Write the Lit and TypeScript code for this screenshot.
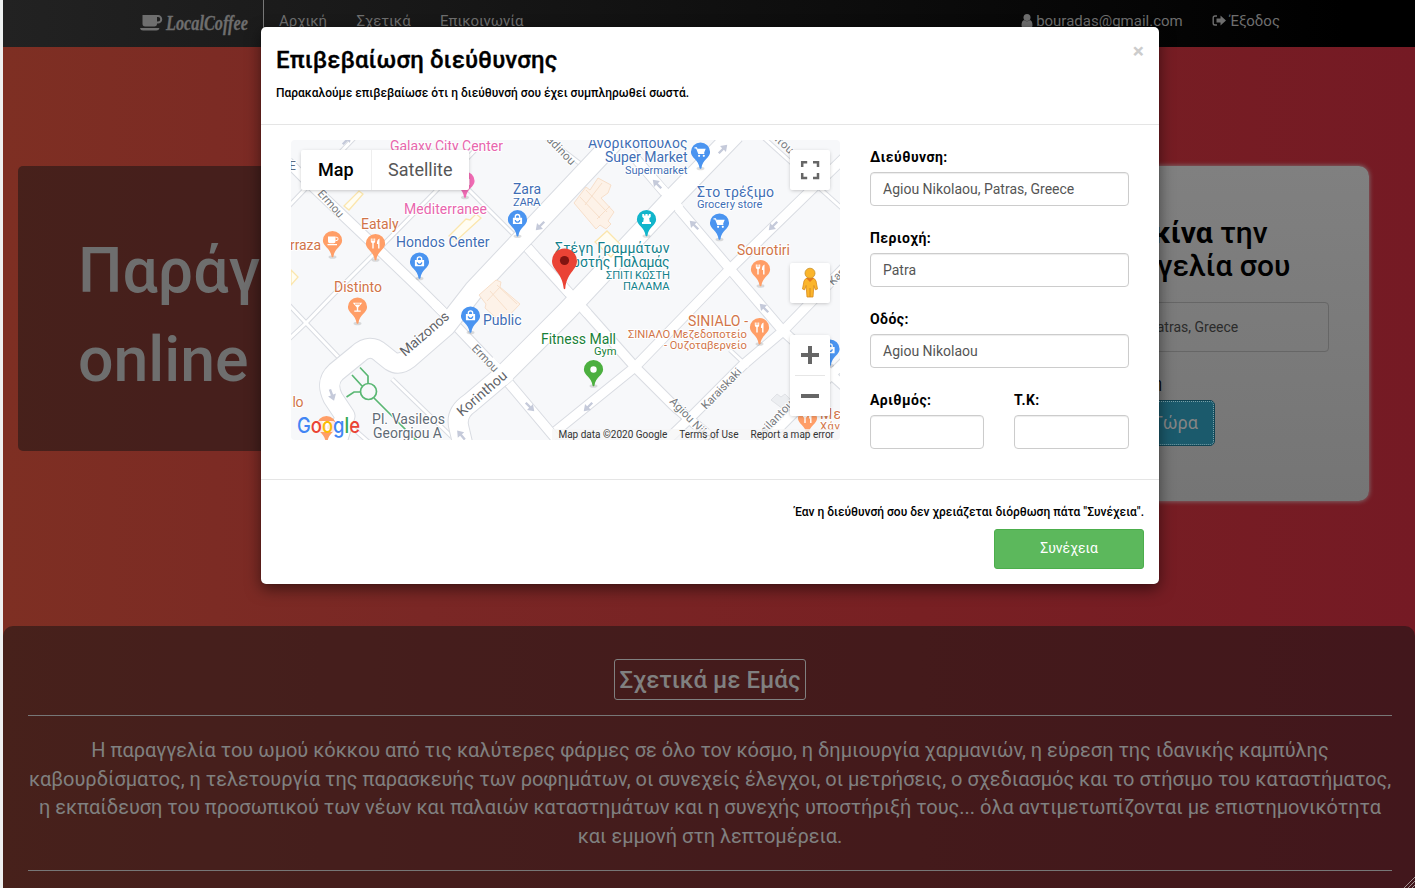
import { LitElement, html, svg, css } from "lit";
import { customElement } from "lit/decorators.js";

type Pin = { x: number; y: number; color: string; glyph: string };

const BLUE = "#4a94f0";
const ORANGE = "#ff9e67";

const pins: Pin[] = [
  { x: 465, y: 181, color: "#f06bb4", glyph: "bed" },
  { x: 517.5, y: 219.7, color: BLUE, glyph: "bag" },
  { x: 419.5, y: 262, color: BLUE, glyph: "bag" },
  { x: 470.5, y: 316, color: BLUE, glyph: "bag" },
  { x: 830, y: 349, color: BLUE, glyph: "bag" },
  { x: 700.5, y: 152, color: BLUE, glyph: "cart" },
  { x: 719.5, y: 223, color: BLUE, glyph: "cart" },
  { x: 332.5, y: 240.5, color: ORANGE, glyph: "cup" },
  { x: 375.5, y: 243.5, color: ORANGE, glyph: "fork" },
  { x: 357.5, y: 307, color: ORANGE, glyph: "glass" },
  { x: 760.5, y: 269.5, color: ORANGE, glyph: "fork" },
  { x: 759.5, y: 327.5, color: ORANGE, glyph: "fork" },
  { x: 807.5, y: 418, color: ORANGE, glyph: "fork" },
  { x: 326.5, y: 425.5, color: ORANGE, glyph: "glass" },
  { x: 646.5, y: 219.5, color: "#12b5cb", glyph: "tower" },
  { x: 593.5, y: 369.5, color: "#4caf3f", glyph: "dot" },
];

const glyphs: Record<string, unknown> = {
  bag: svg`<path d="M-4.6-2h9.2v6.2h-9.2z" fill="#fff"/><path d="M-2.2-1.5v-1.5a2.2 2.2 0 0 1 4.4 0v1.5" fill="none" stroke="#fff" stroke-width="1.3"/><path d="M-2.2.2a2.2 2.2 0 0 0 4.4 0" fill="none" stroke="#4a94f0" stroke-width="1.2"/>`,
  cart: svg`<path d="M-6-4.2h2l2.2 5.6h5.6" fill="none" stroke="#fff" stroke-width="1.2"/><path d="M-3.4-3.2h8.6l-1.7 4.2h-5.5z" fill="#fff"/><circle cx="-1.4" cy="3.8" r="1.1" fill="#fff"/><circle cx="3.3" cy="3.8" r="1.1" fill="#fff"/>`,
  cup: svg`<path d="M-4.5-4h7.5v5q0 1.8-1.8 1.8h-3.9q-1.8 0-1.8-1.8zM-5 3.6h9.5v1.2h-9.5z" fill="#fff"/><path d="M3-3.2h1.5q1 0 1 1.6t-1 1.6h-1.5" fill="none" stroke="#fff"/>`,
  fork: svg`<path d="M-4.7-5v2.8q0 1.6 1.5 2v5.2h1.4v-5.2q1.5-.4 1.5-2v-2.8h-1v2.6h-.7v-2.6h-1v2.6h-.7v-2.6zM4-5q-2.6.8-2.6 5.4h1.2v4.6h1.4z" fill="#fff"/>`,
  glass: svg`<path d="M-4.7-4.3h9.4l-4 4.7v3.2h2.5v1.2h-6.4v-1.2h2.5v-3.2z" fill="#fff"/><path d="M-2.5-2.9h5" stroke="#ff9e67"/>`,
  tower: svg`<path d="M-4.2-5.5h1.9v1.5h1.2v-1.5h2.2v1.5h1.2v-1.5h1.9v3l-1.5 1.2.6 3.8h1.2v2h-9v-2h1.2l.6-3.8-1.500-1.200z" fill="#fff"/>`,
  bed: svg`<path d="M-4.5-3.5h1.3v4h2.2v-2.5h5.5v6h-1.3v-1.6h-6.4v1.6h-1.3z" fill="#fff"/>`,
  dot: svg`<circle r="3.2" fill="#fff"/>`,
};

const drawPin = (p: Pin) => svg`
  <g transform="translate(${p.x} ${p.y})">
    <ellipse cy="16.5" rx="4" ry="1.8" fill="#000" opacity=".13"/>
    <path d="M-9.6 0a9.6 9.6 0 1 1 19.2 0c0 6-7.6 7.5-8.7 16.2q-.9 1-1.8 0c-1.1-8.7-8.7-10.2-8.7-16.2z" fill=${p.color}/>
    ${glyphs[p.glyph]}
  </g>`;

const arterials = [
  "M336 445L345 416L333 398Q325 382 336 372L358 354Q370 343 381 353L391 361Q399 366 408 359L446 326L474 290L618 137L660 97",
  "M463 445L459 428Q455 413 470 403L503 375L567 311L670 201L735 134",
];
const streets = [
  "M556 434L635 370L730 272L845 160",
  "M665 445L693 418L743 368L783 334L845 270",
  "M765 445L845 364",
  "M288 165L313 190L373 247L423 295L442 314L497 372L556 442",
  "M526 249L580 308L635 370L673 408L716 445",
  "M630 155L667 198L730 272L783 334L845 390",
];
const lanes = [
  "M288 210L358 137", "M536 133L582 168", "M754 132L845 214",
  "M426 150L517 241",
  "M288 307L306 326L346 368", "M288 343L306 326L333 298L373 258L433 197L480 148",
  "M392 382L452 440", "M347 426L373 449", "M730 353L748 370",
];

type Label = [string, number, number, number, number, string, string?];
const labels: Label[] = [
  ["Galaxy City Center", 390, 150.5, 14, 113, "#e866ae"],
  ["Mediterranee", 404, 214, 14, 83, "#e866ae"],
  ["Zara", 513, 194, 14, 28, "#3f6eb5"],
  ["ZARA", 513, 206, 11.5, 27.5, "#3f6eb5"],
  ["Hondos Center", 396, 247, 14, 93.5, "#3f6eb5"],
  ["Public", 483, 325, 14, 38.5, "#3f6eb5"],
  ["Eataly", 361, 229, 14, 37.5, "#d17448"],
  ["rraza", 290, 250, 14, 31, "#d17448"],
  ["Distinto", 334, 292, 14, 48, "#d17448"],
  ["lo", 292.5, 407, 14, 11, "#d17448"],
  ["E", 289, 170, 12, 8, "#5b6b83"],
  ["Ανδρικόπουλος", 588, 148, 14, 99.5, "#3f6eb5"],
  ["Super Market", 605, 162, 14, 82.5, "#3f6eb5"],
  ["Supermarket", 625, 174, 11.2, 62.5, "#3f6eb5"],
  ["Στο τρέξιμο", 697, 197, 14, 77, "#3f6eb5"],
  ["Grocery store", 697, 208, 11.2, 65.5, "#3f6eb5"],
  ["Στέγη Γραμμάτων", 555, 253, 14, 114.5, "#12818c"],
  ["Κωστής Παλαμάς", 560, 267, 14, 109.5, "#12818c"],
  ["ΣΠΙΤΙ ΚΩΣΤΗ", 606, 279, 11.2, 64, "#12818c"],
  ["ΠΑΛΑΜΑ", 623, 290, 11.2, 46.5, "#12818c"],
  ["Sourotiri", 737, 255, 14, 53, "#d17448"],
  ["SINIALO -", 688, 326, 14, 60, "#d17448"],
  ["ΣΙΝΙΑΛΟ Μεζεδοποτείο", 628, 338, 11.2, 119, "#d17448"],
  ["- Ουζοταβερνείο", 664, 349, 11.2, 83, "#d17448"],
  ["Fitness Mall", 541, 344, 14, 75, "#188038"],
  ["Gym", 594, 355, 11.2, 22.5, "#188038"],
  ["Pl. Vasileos", 372, 424, 14, 73, "#5f6b76"],
  ["Georgiou A", 373, 438, 14, 69, "#5f6b76"],
  ["Με", 820, 419, 14, 21, "#d17448"],
  ["Χάν", 820, 430, 11.2, 20, "#d17448"],
  ["Maizonos", 405, 357, 14, 60, "#5f6368", "rotate(-41 405 357)"],
  ["Korinthou", 462, 417, 14, 61, "#5f6368", "rotate(-41 462 417)"],
  ["Ermou", 317, 194, 11.5, 33, "#777b80", "rotate(48 317 194)"],
  ["Ermou", 471, 349, 11.5, 33, "#777b80", "rotate(46 471 349)"],
  ["Vadinou", 541, 135, 11.5, 43, "#777b80", "rotate(46 541 135)"],
  ["Karatou", 758, 125, 11.5, 43, "#777b80", "rotate(43 758 125)"],
  ["Agiou Nikolaou", 669, 402, 11.5, 78, "#777b80", "rotate(46 669 402)"],
  ["Karaiskaki", 706, 410, 11.5, 52, "#777b80", "rotate(-46 706 410)"],
  ["Ipsilantou", 758, 442, 11.5, 52, "#777b80", "rotate(-46 758 442)"],
  ["Karaiskaki", 833, 286, 11.5, 50, "#777b80", "rotate(-46 833 286)"],
];

const arrows: [number, number, number][] = [
  [347, 142, -45], [540, 228, 135], [657, 186, -135], [694, 227, -135], [723, 151, -45],
  [773, 228, 135], [764, 310, -135], [588, 418, 135], [530, 418, 45], [332, 406, 70], [461, 446, -130],
];

@customElement("address-map")
export class AddressMap extends LitElement {
  static styles = css`
    :host { display: block; width: 549px; height: 300px; font-family: Roboto, sans-serif; }
    .map { display: grid; width: 549px; height: 300px; overflow: hidden; border-radius: 4px; }
    .canvas, .controls { grid-area: 1 / 1; }
    .canvas { display: block; }
    .label { paint-order: stroke; stroke: #fff; stroke-width: 2px; stroke-linejoin: round; }
    .logo { font-family: Inter, sans-serif; font-size: 21px; font-weight: 500; }
    .halo { stroke: #fff; stroke-width: 3px; fill: #fff; stroke-linejoin: round; }
    .controls { z-index: 1; display: grid; grid-template-columns: 1fr auto; grid-template-rows: 1fr auto; padding: 10px 10px 0 10px; height: 290px; }
    .types { display: flex; align-self: start; height: 40px; width: 168px; background: #fff; border-radius: 2px; box-shadow: 0 1px 4px -1px rgba(0,0,0,.3); font-size: 18px; line-height: 40px; }
    .type { width: 98px; text-align: center; color: #565656; }
    .type.active { width: 70px; color: #000; font-weight: 500; border-right: 1px solid #eee; }
    .stack { display: flex; flex-direction: column; width: 40px; }
    .ctl { width: 40px; height: 40px; background: #fff; border-radius: 2px; box-shadow: 0 1px 4px -1px rgba(0,0,0,.3); }
    .man { margin-top: 73px; }
    .zoom { margin-top: 32px; height: 81px; }
    .ctl svg { display: block; }
    .legal { grid-column: 1 / 3; display: flex; justify-content: flex-end; height: 11px; margin-right: -10px; font-size: 10px; line-height: 11px; color: #333; }
    .legal span { background: rgba(245,245,245,.75); padding: 0 6px; white-space: nowrap; }
  `;
  render() {
    return html`<div class="map">
      <svg class="canvas" width="549" height="300" viewBox="291 140 549 300">
        <rect x="291" y="140" width="549" height="300" fill="#f7f8fa"/>
        <g transform="translate(0 -3)">
        <g fill="none" stroke="#d9dce2" stroke-linejoin="round">
          ${lanes.map((d) => svg`<path d=${d} stroke-width="5"/>`)}
          ${streets.map((d) => svg`<path d=${d} stroke-width="11"/>`)}
        </g>
        <g fill="none" stroke="#fff" stroke-linejoin="round">
          ${lanes.map((d) => svg`<path d=${d} stroke-width="3"/>`)}
          ${streets.map((d) => svg`<path d=${d} stroke-width="9"/>`)}
        </g>
        </g>
        <g fill="none" stroke="#d9dce2" stroke-linejoin="round">
          ${arterials.map((d) => svg`<path d=${d} stroke-width="21"/>`)}
        </g>
        <g fill="none" stroke="#fff" stroke-linejoin="round">
          ${arterials.map((d) => svg`<path d=${d} stroke-width="19"/>`)}
          <path d="M435 304L455 324M490 360L510 382M528 248L535 256M561 284L588 314M655 181L680 209" stroke-width="9"/>
        </g>
        <g fill="#fffdf3" stroke="#fbe6ad" stroke-width="1.3">
          <path d="M344 206l15-15 4 3-14 16z"/>
          <path d="M449 236l17-17 4 1 6-6 5 4-25 23z"/>
          <path d="M291 270l7 7-7 8z"/>
          <path d="M595 242l12-11 14 14-10 12z"/>
        </g>
        <g fill="#fdf2e8" stroke="#f7dfca">
          <path d="M574 203l12-16 4 3 8-12 13 7-3 8-7 5 13 14-6 9 3 3-5 5-6-4-4 4z"/>
          <path d="M586 190l21 22M580 197l20 21M602 183l-17 22M610 206l-13 13" fill="none"/>
          <path d="M479 295l17-15 5 2-1 5 20 17-18 19-17-15 1-4z"/>
          <path d="M497 285l20 19M490 291l17 19M500 287l-13 14" fill="none"/>
        </g>
        <path d="M771 400l6-6 4 3 4-3 9 9-7 9z" fill="#eceef1" stroke="#e0e2e6"/>
        <g fill="none" stroke="#5ab773" stroke-width="1.7">
          <circle cx="368.5" cy="404.500" r="8" transform="translate(0 -13)"/>
          <path d="M368 383.500v-7.500l-8-8.500M362 386l-10-11M360.500 392h-6.500l-7.500 5M374 398l18 18 26 26"/>
        </g>
        ${arrows.map(([x, y, a]) => svg`<path transform="translate(${x} ${y > 400 ? y - 11 : y - 2}) rotate(${a})" d="M-6-1.2h6v-3l6 4.2-6 4.2v-3h-6z" fill="#c5cada"/>`)}
        ${labels.map(([t, x, y, s, w, c, r]) => svg`<text class="label" x=${x} y=${y} font-size=${s} textLength=${w} lengthAdjust="spacing" fill=${c} transform=${r ?? ""}>${t}</text>`)}
        ${pins.map(drawPin)}
        <path d="M552 261a12.5 12.5 0 0 1 25 0c0 9-10.5 12-11.7 27.500q-.8 1.500-1.600 0C562.500 273 552 270 552 261z" fill="#ea4335"/>
        <circle cx="564.5" cy="260.5" r="4.6" fill="#811411"/>
        <rect x="311" y="421" width="26" height="11" rx="5" fill="#fff" opacity=".8"/>
        <text class="logo" x="297" y="433" textLength="63" lengthAdjust="spacingAndGlyphs"><tspan fill="#4285f4">G</tspan><tspan fill="#ea4335">o</tspan><tspan fill="#fbbc04">o</tspan><tspan fill="#4285f4">g</tspan><tspan fill="#34a853">l</tspan><tspan fill="#ea4335">e</tspan></text>
      </svg>
      <div class="controls">
        <div class="types"><span class="type active">Map</span><span class="type">Satellite</span></div>
        <div class="stack">
          <div class="ctl"><svg width="40" height="40" fill="none" stroke="#666" stroke-width="2.500"><path d="M12.200 17v-4.800h5M23 12.200h5v4.800M28 23v5h-5M17.200 28h-5v-5"/></svg></div>
          <div class="ctl man"><svg width="40" height="40"><path d="M14 18q1-3.500 6-3.500t6 3.500l1.500 8-2.200.8-1.400-4.300-.9 11.500h-6l-.9-11.500-1.400 4.300-2.200-.8z" fill="#fbb52b" stroke="#d88a1c" stroke-width=".8"/><path d="M16 15h8l-4 4z" fill="#e5761d"/><path d="M20 25v9" stroke="#d88a1c"/><circle cx="20" cy="10.200" r="5" fill="#fbb52b" stroke="#c6922d" stroke-width=".8"/></svg></div>
          <div class="ctl zoom"><svg width="40" height="81"><path d="M11 20h18M20 11v18M11 61h18" stroke="#666" stroke-width="4"/><path d="M5 40.500h30" stroke="#e6e6e6"/></svg></div>
        </div>
        <div class="legal"><span>Map data ©2020 Google</span><span>Terms of Use</span><span>Report a map error</span></div>
      </div>
    </div>`;
  }
}

@customElement("app-root")
export class AppRoot extends LitElement {
  static styles = css`
    :host { display: block; position: relative; width: 1415px; height: 888px; overflow: hidden; font-family: Roboto, sans-serif; font-size: 14px; line-height: 20px; color: #000; }
    * { box-sizing: border-box; }
    .page { height: 888px; border-left: 3px solid #eef0f0; display: flex; flex-direction: column; background: linear-gradient(90deg, #7e2f23 0%, #7a2725 30%, #782023 65%, #751a24 100%); }
    .nav { flex: none; display: flex; height: 47px; background: linear-gradient(90deg, #222, #000 95%); color: #6e6e6e; font-size: 15px; line-height: 42px; }
    .brand { display: flex; width: 261px; padding-left: 137px; border-right: 1px solid #777; }
    .brand svg { display: block; }
    .menu { display: flex; gap: 29.5px; padding-left: 15px; flex: 1; letter-spacing: -.06px; }
    .user { display: flex; gap: 29px; padding-right: 135px; }
    .item { display: flex; align-items: center; height: 42px; gap: 3px; }
    .hero { flex: none; display: flex; justify-content: space-between; align-items: flex-start; padding: 119px 46px 0 15px; height: 579px; }
    .pitch { width: 700px; height: 285px; border-radius: 5px; background: rgba(20,20,20,.525); padding: 60px 60px; color: #6e6e6e; font-size: 62.6px; font-weight: 500; line-height: 89px; }
    .order { width: 375px; height: 335px; border-radius: 10px; background: linear-gradient(#808080, #757575); box-shadow: 0 0 5px #808080; padding: 50px 40px; display: flex; flex-direction: column; align-items: center; }
    .order h2 { margin: 0 0 20px; font-size: 30px; line-height: 33px; font-weight: 500; text-align: center; width: 300px; }
    .order h2 b { padding-left: 24px; }
    .where { width: 295px; height: 50px; border: 1px solid #666; border-radius: 4px; padding: 0 12px; line-height: 48px; color: #2b2b2b; }
    .or { align-self: flex-start; width: 128px; text-align: right; margin: 21px 0 7px; font-size: 14px; }
    .now { align-self: flex-start; width: 181px; height: 46px; border-radius: 5px; background: #1b5a6c; border: 1px solid #0f4353; outline: 1px dotted #7aa0a8; outline-offset: -2px; color: #858585; text-align: right; padding-right: 16px; font-size: 18px; line-height: 44px; }
    .about { flex: 1; border-radius: 10px 10px 0 0; background: rgba(20,20,20,.525); padding: 33px 23px 0 25px; text-align: center; color: #808080; }
    .about h3 { display: inline-block; margin: 0; width: 192px; height: 41px; border: 1px solid #808080; border-radius: 3px; font-size: 24px; font-weight: 500; line-height: 41px; white-space: nowrap; vertical-align: top; }
    .rule { height: 1px; background: #777; margin-top: 15px; }
    .about p { margin: 20px -10px; font-size: 20px; line-height: 28.570px; white-space: nowrap; letter-spacing: -.025px; }
    .about p + .rule { margin-top: 0; }
    .grip { position: absolute; right: 0; bottom: 0; }
    .modal { position: absolute; left: 261px; top: 27px; width: 898px; height: 557px; background: #fff; border-radius: 5px; box-shadow: 0 5px 15px rgba(0,0,0,.5), 0 0 1px rgba(0,0,0,.5); }
    .head { height: 98px; padding: 15px; border-bottom: 1px solid #e5e5e5; display: flex; justify-content: space-between; }
    .head h1 { margin: 2px 0 9px; font-size: 24px; line-height: 32px; font-weight: 500; letter-spacing: .1px; -webkit-text-stroke: .3px #000; }
    .note { font-size: 12px; line-height: 17px; font-weight: 500; }
    .close { font-size: 21px; font-weight: 700; color: #ccc; line-height: 18px; }
    .body { display: flex; height: 355px; padding: 15px 30px; gap: 30px; border-bottom: 1px solid #e5e5e5; }
    .form { display: grid; grid-template-columns: 114px 115px; column-gap: 30px; row-gap: 22px; align-content: start; padding-top: 7px; }
    .field { display: flex; flex-direction: column; gap: 5px; font-weight: 700; letter-spacing: .45px; }
    .wide { grid-column: 1 / 3; }
    .input { height: 34px; border: 1px solid #ccc; border-radius: 4px; box-shadow: inset 0 1px 1px rgba(0,0,0,.075); padding: 0 12px; line-height: 32px; font-weight: 400; letter-spacing: 0; color: #555; }
    .foot { padding: 24px 15px; display: flex; flex-direction: column; align-items: flex-end; gap: 8px; }
    .go { width: 150px; height: 40px; background: #5cb85c; border: 1px solid #4cae4c; border-radius: 3px; color: #fff; text-align: center; line-height: 37px; }
  `;
  render() {
    return html`
      <div class="page">
        <div class="nav">
          <div class="brand">
            <svg width="114" height="47" fill="#6e6e6e">
              <path fill-rule="evenodd" d="M2.500 15h15.500a4 4 0 0 1 0 8.500h-1v.3q0 2.700-2.700 2.700h-9.200q-2.600 0-2.600-2.700zM17 17v4.500h1a2.200 2.200 0 0 0 0-4.500zM0 28h19.500q-.6 2.500-3 2.500h-13.500q-2.600 0-3-2.500z"/>
              <text x="26" y="29.500" font-family="'Liberation Serif', serif" font-style="italic" font-weight="700" font-size="21" stroke="#6e6e6e" stroke-width=".3" textLength="82" lengthAdjust="spacingAndGlyphs">LocalCoffee</text>
            </svg>
          </div>
          <div class="menu"><span>Αρχική</span><span>Σχετικά</span><span>Επικοινωνία</span></div>
          <div class="user">
            <span class="item"><svg width="12" height="14" fill="#6e6e6e"><circle cx="6" cy="3.600" r="3.500"/><path d="M3 6q3 2.600 6 0 2.500.8 2.500 5.500 0 2.500-2 2.500h-7q-2 0-2-2.500 0-4.700 2.500-5.500z"/></svg>bouradas@gmail.com</span>
            <span class="item"><svg width="15" height="14" fill="#6e6e6e"><path d="M5 2h-2q-1.800 0-1.800 1.800v5.400q0 1.800 1.800 1.800h2" fill="none" stroke="#6e6e6e" stroke-width="1.400"/><path d="M4.500 4.500h4v-3l5.500 5-5.500 5v-3h-4z"/></svg>Έξοδος</span>
          </div>
        </div>
        <div class="hero">
          <div class="pitch">Παράγγειλε<br>online</div>
          <div class="order">
            <h2><b>Ξεκίνα</b> την παραγγελία σου</h2>
            <div class="where">Agiou Nikolaou, Patras, Greece</div>
            <div class="or">Πάτρα, η</div>
            <div class="now">Παράγγειλε Τώρα</div>
          </div>
        </div>
        <div class="about">
          <h3>Σχετικά με Εμάς</h3>
          <div class="rule"></div>
          <p>Η παραγγελία του ωμού κόκκου από τις καλύτερες φάρμες σε όλο τον κόσμο, η δημιουργία χαρμανιών, η εύρεση της ιδανικής καμπύλης<br>καβουρδίσματος, η τελετουργία της παρασκευής των ροφημάτων, οι συνεχείς έλεγχοι, οι μετρήσεις, ο σχεδιασμός και το στήσιμο του καταστήματος,<br>η εκπαίδευση του προσωπικού των νέων και παλαιών καταστημάτων και η συνεχής υποστήριξή τους... όλα αντιμετωπίζονται με επιστημονικότητα<br>και εμμονή στη λεπτομέρεια.</p>
          <div class="rule"></div>
        </div>
      </div>
      <svg class="grip" width="11" height="11" stroke="#a09090" fill="none"><path d="M0 11L11 0M4 11l7-7M8 11l3-3"/></svg>
      <div class="modal">
        <div class="head">
          <div><h1>Επιβεβαίωση διεύθυνσης</h1><div class="note">Παρακαλούμε επιβεβαίωσε ότι η διεύθυνσή σου έχει συμπληρωθεί σωστά.</div></div>
          <div class="close">×</div>
        </div>
        <div class="body">
          <address-map></address-map>
          <div class="form">
            <div class="field wide">Διεύθυνση:<div class="input">Agiou Nikolaou, Patras, Greece</div></div>
            <div class="field wide">Περιοχή:<div class="input">Patra</div></div>
            <div class="field wide">Οδός:<div class="input">Agiou Nikolaou</div></div>
            <div class="field">Αριθμός:<div class="input"></div></div>
            <div class="field">Τ.Κ:<div class="input"></div></div>
          </div>
        </div>
        <div class="foot">
          <div class="note">Έαν η διεύθυνσή σου δεν χρειάζεται διόρθωση πάτα "Συνέχεια".</div>
          <div class="go">Συνέχεια</div>
        </div>
      </div>`;
  }
}
